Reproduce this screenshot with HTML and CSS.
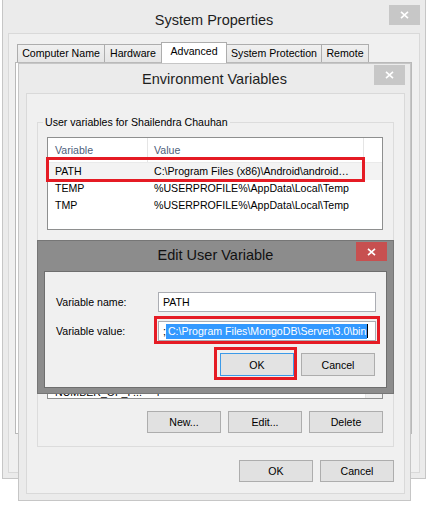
FILE: index.html
```html
<!DOCTYPE html>
<html>
<head>
<meta charset="utf-8">
<title>System Properties</title>
<link rel="stylesheet" href="styles.css">
</head>
<body>
<div class="desktop">

  <section class="window sys">
    <header class="titlebar sys-bar">
      <span class="title">System Properties</span>
      <span class="close inactive"><svg width="9" height="8" viewBox="0 0 9 8"><path d="M1 0.8 L8 7.2 M8 0.8 L1 7.2" stroke="#fff" stroke-width="1.6" fill="none"/></svg></span>
    </header>
    <div class="client sys-client">
      <div class="tabs">
        <span class="tab tab-computer">Computer Name</span>
        <span class="tab tab-hardware">Hardware</span>
        <span class="tab tab-advanced active">Advanced</span>
        <span class="tab tab-protection">System Protection</span>
        <span class="tab tab-remote">Remote</span>
      </div>
      <div class="tabpanel"></div>
    </div>
  </section>

  <section class="window env">
    <header class="titlebar env-bar">
      <span class="title">Environment Variables</span>
      <span class="close inactive"><svg width="9" height="8" viewBox="0 0 9 8"><path d="M1 0.8 L8 7.2 M8 0.8 L1 7.2" stroke="#fff" stroke-width="1.6" fill="none"/></svg></span>
    </header>
    <div class="client env-client">
      <fieldset class="group user-group">
        <legend>User variables for Shailendra Chauhan</legend>
        <div class="listview user-list">
          <div class="lv-head">
            <span class="c1">Variable</span><span class="c2">Value</span><span class="c3"></span>
          </div>
          <div class="lv-row selected"><span class="c1">PATH</span><span class="c2">C:\Program Files (x86)\Android\android…</span></div>
          <div class="lv-row"><span class="c1">TEMP</span><span class="c2">%USERPROFILE%\AppData\Local\Temp</span></div>
          <div class="lv-row"><span class="c1">TMP</span><span class="c2">%USERPROFILE%\AppData\Local\Temp</span></div>
          <div class="annot annot-path"></div>
        </div>
      </fieldset>

      <fieldset class="group system-group">
        <div class="listview sys-list">
          <div class="lv-body">
            <div class="lv-row"><span class="c1">NUMBER_OF_P...</span><span class="c2">4</span></div>
          </div>
          <div class="scrollbar"></div>
        </div>
        <div class="btnrow group-buttons">
          <button class="btn">New...</button><button class="btn">Edit...</button><button class="btn">Delete</button>
        </div>
      </fieldset>

      <div class="btnrow dialog-buttons">
        <button class="btn">OK</button><button class="btn">Cancel</button>
      </div>
    </div>
  </section>

  <section class="window edit">
    <header class="titlebar edit-bar">
      <span class="title">Edit User Variable</span>
      <span class="close active-close"><svg width="9" height="8" viewBox="0 0 9 8"><path d="M1 0.8 L8 7.2 M8 0.8 L1 7.2" stroke="#fff" stroke-width="1.6" fill="none"/></svg></span>
    </header>
    <div class="client edit-client">
      <div class="form">
        <span class="label">Variable name:</span>
        <div class="field"><span class="input-text">PATH</span></div>
        <span class="label">Variable value:</span>
        <div class="field-wrap">
          <div class="field"><span class="input-text">;<span class="selection">C:\Program Files\MongoDB\Server\3.0\bin</span><span class="caret"></span></span></div>
          <div class="annot annot-field"></div>
        </div>
        <div class="btnrow edit-buttons">
          <div class="btn-wrap">
            <button class="btn default">OK</button>
            <div class="annot annot-ok"></div>
          </div>
          <button class="btn">Cancel</button>
        </div>
      </div>
    </div>
  </section>

</div>
</body>
</html>
```

FILE: styles.css
```css
* { box-sizing: border-box; }

html, body {
  margin: 0;
  padding: 0;
}

body {
  width: 429px;
  height: 505px;
  background: #ffffff;
  font-family: "Liberation Sans", Arial, sans-serif;
  font-size: 10.6px;
  color: #000;
  overflow: hidden;
}

.desktop {
  position: relative;
  width: 429px;
  height: 505px;
  overflow: hidden;
}

/* ---------- windows ---------- */
.window {
  position: absolute;
  display: flex;
  flex-direction: column;
  background: #ebebeb;
  border: 1px solid #c6c6c6;
}

.sys { left: 2px; top: -1px; width: 424px; height: 480px; }
.env { left: 18px; top: 63px; width: 393px; height: 438px; }
.edit { left: 37px; top: 240px; width: 357px; height: 154px; background: #8c8c8c; border-color: #767676; }

.titlebar {
  display: grid;
  grid-template-columns: 1fr auto 1fr;
  flex: none;
}

.title {
  grid-column: 2;
  font-size: 14.5px;
  line-height: 18px;
  color: #1e1e1e;
  white-space: nowrap;
}

.close {
  grid-column: 3;
  justify-self: end;
  align-self: start;
  width: 31px;
  height: 20px;
  display: flex;
  align-items: center;
  justify-content: center;
}
.close.inactive { background: #c7c7c7; }
.close.active-close { background: #c75050; }

.sys-bar { height: 33px; }
.sys-bar .title { margin-top: 11px; }
.sys-bar .close { margin-top: 5px; margin-right: 5px; }

.env-bar { height: 29px; }
.env-bar .title { margin-top: 6px; }
.env-bar .close { margin-top: 1px; margin-right: 5px; }

.edit-bar { height: 30px; }
.edit-bar .title { margin-top: 5px; color: #111; }
.edit-bar .close { margin-top: 1px; margin-right: 6px; height: 19px; }

.client {
  flex: 1;
  background: #f0f0f0;
  border: 1px solid #d9d9d9;
  display: flex;
  flex-direction: column;
}

.sys-client { margin: 0 5px 5px 5px; }
.env-client { margin: 0 5px 6px 7px; }
.edit-client { margin: 0 6px 5px 6px; border-color: #6e6e6e; }

/* ---------- tabs ---------- */
.tabs {
  display: flex;
  align-items: flex-end;
  height: 20px;
  margin-top: 8px;
  padding-left: 8px;
  position: relative;
  z-index: 1;
}

.tab {
  height: 18px;
  line-height: 17px;
  text-align: center;
  white-space: nowrap;
  border: 1px solid #adadad;
  border-bottom: none;
  background: linear-gradient(#f0f0f0, #e5e5e5);
  margin-left: -1px;
}
.tab:first-child { margin-left: 0; }
.tab.active {
  height: 21px;
  padding-bottom: 3px;
  margin-bottom: -1px;
  background: #ffffff;
  position: relative;
  z-index: 2;
}

.tab-computer { width: 88px; }
.tab-hardware { width: 58px; }
.tab-advanced { width: 66px; }
.tab-protection { width: 96px; }
.tab-remote { width: 48px; }

.tabpanel {
  height: 372px;
  margin: 0 7px 0 6px;
  background: #ffffff;
  border: 1px solid #b9b9b9;
}

/* ---------- environment variables ---------- */
.group {
  margin: 0 10px;
  padding: 0 0 13px 0;
  border: 1px solid #dcdcdc;
  min-width: 0;
}
.user-group { margin-top: 21px; padding-bottom: 47px; }
.system-group { margin-top: 7px; padding-top: 21px; }

.group legend {
  margin-left: 5px;
  padding: 0 2px;
  line-height: 14px;
}

.listview {
  position: relative;
  margin: 8px 10px 0 9px;
  height: 93px;
  background: #ffffff;
  border: 1px solid #8e8f8f;
}
.sys-list {
  margin-top: 0;
  height: 92px;
  display: flex;
  overflow: hidden;
}
.sys-list .lv-body {
  flex: 1;
  display: flex;
  flex-direction: column;
  justify-content: flex-end;
}
.sys-list .lv-row { margin-bottom: -3px; }

.lv-head {
  display: flex;
  height: 25px;
  border-bottom: 1px solid #eaeaea;
  color: #4c607a;
}
.lv-head .c1, .lv-head .c2 { border-right: 1px solid #e5e5e5; }
.lv-head span { line-height: 24px; }

.lv-row {
  display: flex;
  height: 17px;
  line-height: 17px;
  white-space: nowrap;
  flex: none;
}
.lv-row.selected { background: #f3f3f3; }

.c1 { width: 100px; padding-left: 7px; flex: none; overflow: hidden; }
.c2 { width: 216px; padding-left: 6px; flex: none; overflow: hidden; }
.c3 { flex: 1; }
.sys-list .c2 { width: auto; flex: 1; }

.scrollbar {
  width: 17px;
  flex: none;
  background: #f0f0f0;
  border-left: 1px solid #e6e6e6;
}

.btnrow {
  display: flex;
  justify-content: flex-end;
  gap: 7px;
}
.group-buttons { margin: 12px 10px 0 9px; }
.dialog-buttons { margin: 13px 10px 0 0; }

.btn {
  width: 74px;
  height: 22px;
  padding: 0;
  margin: 0;
  font: inherit;
  color: #000;
  background: #e1e1e1;
  border: 1px solid #adadad;
}

/* ---------- annotations ---------- */
.annot {
  position: absolute;
  border: 3px solid #e51b24;
  pointer-events: none;
}
.annot-path { left: -2px; top: 19px; width: 319px; height: 25px; }

/* ---------- edit dialog ---------- */
.form {
  display: grid;
  grid-template-columns: 102px 218px;
  row-gap: 9px;
  align-items: center;
  padding: 20px 10px 0 11px;
}

.field {
  height: 20px;
  background: #ffffff;
  border: 1px solid #abadb3;
  display: flex;
  align-items: center;
  padding-left: 4px;
  white-space: nowrap;
}

.input-text { line-height: 15px; display: flex; align-items: center; }

.selection {
  background: #3399ff;
  color: #ffffff;
  padding: 0 1px 0 2px;
}
.caret {
  display: inline-block;
  width: 1px;
  height: 14px;
  background: #000;
}

.field-wrap { position: relative; }
.annot-field { left: -4px; top: -5px; right: -4px; bottom: -3px; }

.edit-buttons {
  grid-column: 1 / span 2;
  margin-top: 3px;
  padding-right: 1px;
}
.edit-buttons .btn { height: 23px; }
.btn-wrap { position: relative; }
.btn.default { border-color: #3c9ae8; background: #e3e3e3; }
.annot-ok { left: -6px; top: -6px; right: -3px; bottom: -4px; }
```
